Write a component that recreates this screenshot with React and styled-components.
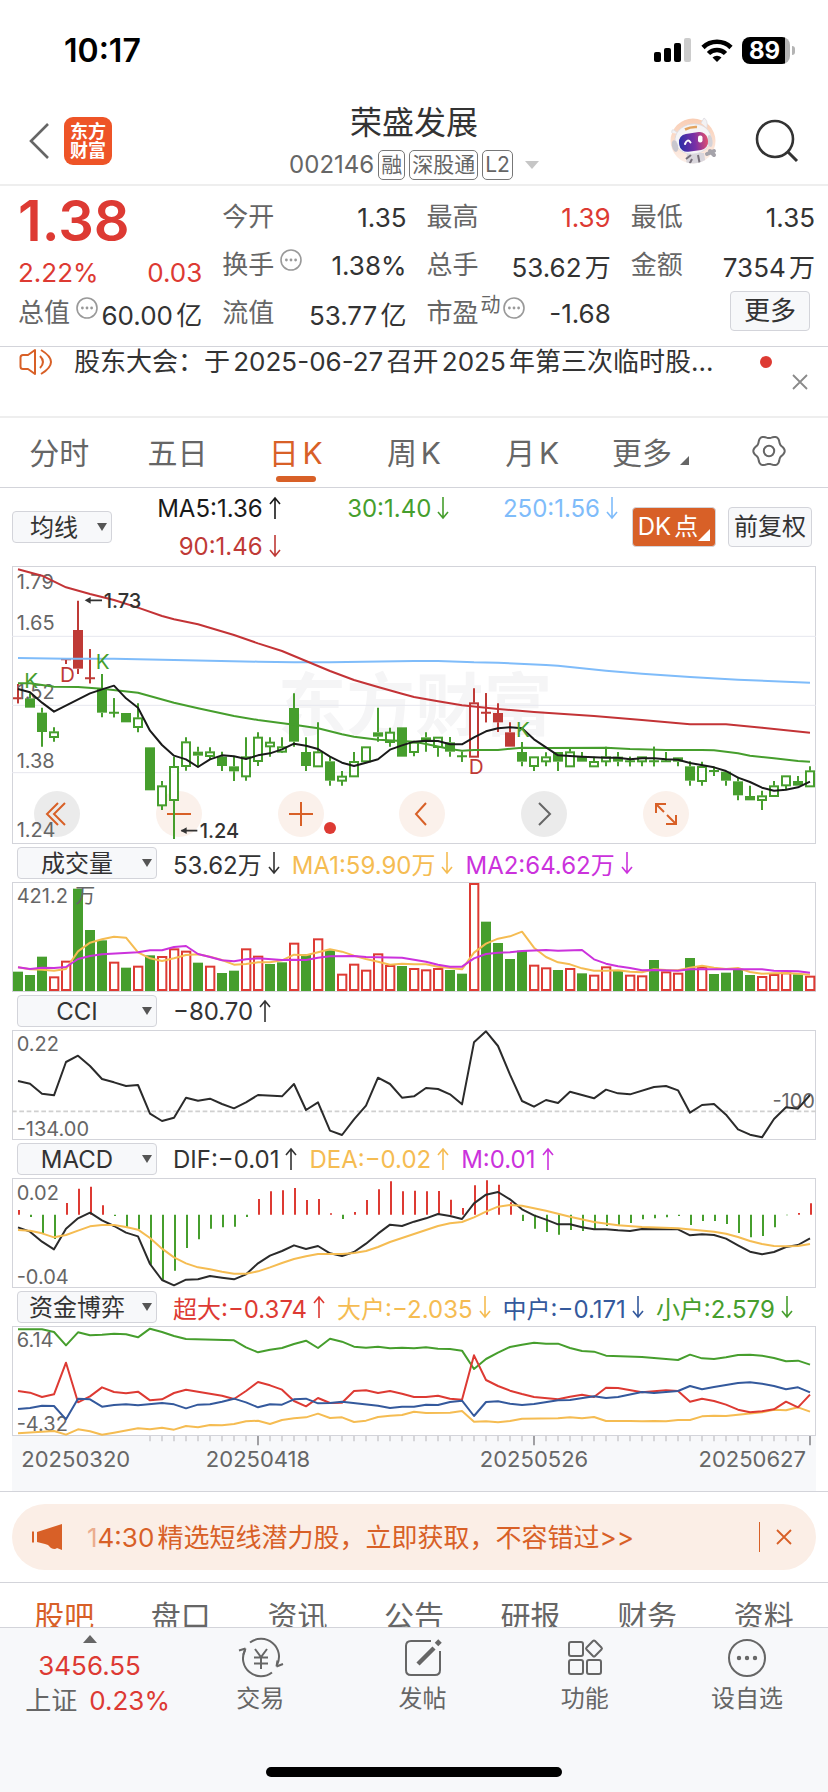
import React from "react";
import styled, { createGlobalStyle } from "styled-components";

const c = {
  text: "#333333",
  sub: "#666666",
  red: "#dd3a33",
  darkRed: "#bf3a36",
  orange: "#d86027",
  green: "#469e2d",
  blue: "#7fbcfa",
  navy: "#34599c",
  yellow: "#f5bc52",
  purple: "#cb32dc",
  line: "#d3d4da",
  panel: "#f7f8fa",
};

const FONT = `Inter, "Noto Sans CJK SC", sans-serif`;

const GlobalStyle = createGlobalStyle`
  * { box-sizing: border-box; }
  body {
    margin: 0;
    background: #fff;
    color: ${c.text};
    font-family: ${FONT};
    text-autospace: normal;
  }
  button, select {
    font-family: inherit;
    color: inherit;
    background: none;
    border: 0;
    padding: 0;
    margin: 0;
    cursor: pointer;
  }
  svg { display: block; flex: none; }
`;

const Page = styled.div`
  display: flex;
  flex-direction: column;
  min-height: 100vh;
`;

/* ---------- status bar ---------- */

const StatusBar = styled.div`
  height: 100px;
  padding: 0 33px 0 64px;
  display: flex;
  align-items: center;
  justify-content: space-between;
  color: #000;
`;

const Clock = styled.time`
  font-size: 32px;
  font-weight: 600;
`;

const StatusIcons = styled.div`
  display: flex;
  align-items: center;
  gap: 9px;
`;

const Battery = styled.div`
  display: flex;
  align-items: center;
  gap: 2px;
`;

const BatteryBody = styled.span`
  width: 48px;
  height: 27px;
  border-radius: 8px;
  background: linear-gradient(90deg, #000 43px, #b4b4b4 43px);
  color: #fff;
  font-size: 24px;
  line-height: 27px;
  font-weight: 700;
  text-align: center;
  padding-right: 3px;
`;

const BatteryTip = styled.span`
  width: 3px;
  height: 9px;
  border-radius: 0 4px 4px 0;
  background: #b4b4b4;
`;

/* ---------- header ---------- */

const Header = styled.header`
  display: grid;
  grid-template-columns: 1fr auto 1fr;
  align-items: center;
  padding: 3px 29px 4px;
  border-bottom: 2px solid #eeeeee;
`;

const HeaderSide = styled.div`
  display: flex;
  align-items: center;
  justify-content: ${(p) => (p.$end ? "flex-end" : "flex-start")};
  gap: ${(p) => (p.$end ? "38px" : "15px")};
  padding-bottom: 2px;
`;

const Logo = styled.a`
  width: 48px;
  height: 48px;
  border-radius: 9px;
  background: #ee5427;
  color: #fff;
  font-size: 18px;
  line-height: 19px;
  font-weight: 700;
  text-align: center;
  text-decoration: none;
  padding-top: 5px;
`;

const TitleBlock = styled.div`
  display: flex;
  flex-direction: column;
  align-items: center;
  gap: 7px;
`;

const Title = styled.h1`
  margin: 0;
  font-size: 32px;
  line-height: 40px;
  font-weight: 400;
`;

const CodeLine = styled.div`
  display: flex;
  align-items: center;
  gap: 4px;
  color: ${c.sub};
  font-size: 24px;
  line-height: 30px;
`;

const Chip = styled.span`
  height: 30px;
  border: 1px solid #777;
  border-radius: 5px;
  padding: 0 2px;
  font-size: 21px;
  line-height: 28px;
`;

const Caret = styled.span`
  width: 0;
  height: 0;
  margin-left: ${(p) => p.$gap || "0"};
  border: 7px solid transparent;
  border-top: 8px solid #c6c6c6;
  border-bottom: 0;
`;

/* ---------- quote ---------- */

const Quote = styled.section`
  display: grid;
  grid-template-columns: repeat(4, 1fr);
  column-gap: 20px;
  padding: 7px 13px 9px 18px;
  border-bottom: 1px solid ${c.line};
  font-size: 26px;
`;

const QuoteColumn = styled.div`
  display: flex;
  flex-direction: column;
`;

const Price = styled.strong`
  color: ${c.red};
  font-size: 56px;
  line-height: 56px;
  font-weight: 600;
`;

const QuoteRow = styled.div`
  display: flex;
  align-items: center;
  justify-content: space-between;
  height: ${(p) => p.$h || "48px"};
  color: ${(p) => (p.$red ? c.red : c.text)};
  white-space: nowrap;
`;

const QuoteLabel = styled.span`
  display: flex;
  align-items: flex-start;
  gap: 6px;
  line-height: 36px;
  color: ${c.sub};
`;

const Sup = styled.sup`
  font-size: 20px;
  line-height: 20px;
  margin: 0 -4px;
  vertical-align: top;
`;

const InfoIcon = styled.svg`
  margin-top: 2px;
`;

const MoreButton = styled.button`
  align-self: flex-end;
  width: 80px;
  height: 40px;
  margin: 2px 5px 0 0;
  border: 1px solid ${c.line};
  border-radius: 4px;
  background: ${c.panel};
  font-size: 26px;
  line-height: 38px;
`;

/* ---------- notice ---------- */

const Notice = styled.section`
  display: flex;
  height: 71px;
  padding: 0 20px 0 19px;
  border-bottom: 2px solid #eeeeee;
`;

const NoticeText = styled.p`
  flex: 1;
  margin: 0 0 0 21px;
  font-size: 26px;
  line-height: 30px;
  white-space: nowrap;
`;

const NoticeDot = styled.span`
  width: 12px;
  height: 12px;
  margin: 9px 20px 0 0;
  border-radius: 50%;
  background: ${c.red};
`;

const NoticeClose = styled.button`
  align-self: center;
`;

/* ---------- period tabs ---------- */

const Periods = styled.nav`
  display: grid;
  grid-template-columns: repeat(7, 1fr);
  height: 70px;
  border-bottom: 1px solid ${c.line};
`;

const Period = styled.button`
  position: relative;
  display: flex;
  align-items: center;
  justify-content: center;
  gap: 8px;
  padding-bottom: 4px;
  font-size: 30px;
  color: ${(p) => (p.$active ? c.orange : c.sub)};
  &::after {
    content: "";
    display: ${(p) => (p.$active ? "block" : "none")};
    position: absolute;
    bottom: 5px;
    left: calc(50% - 20px);
    width: 40px;
    height: 6px;
    border-radius: 3px;
    background: ${c.orange};
  }
`;

const Corner = styled.span`
  width: 0;
  height: 0;
  align-self: flex-end;
  margin-bottom: ${(p) => p.$lift || "0"};
  border-left: ${(p) => p.$size} solid transparent;
  border-bottom: ${(p) => p.$size} solid ${(p) => p.$color};
`;

/* ---------- indicator headers ---------- */

const AverageBar = styled.div`
  display: flex;
  align-items: center;
  height: 78px;
  padding: 0 16px 0 12px;
`;

const AverageGrid = styled.div`
  flex: 1;
  display: grid;
  grid-template-columns: repeat(3, 1fr);
  row-gap: 2px;
  padding-right: 14px;
`;

const Reading = styled.span`
  display: flex;
  align-items: center;
  justify-content: ${(p) => (p.$end ? "flex-end" : "flex-start")};
  gap: 6px;
  height: 36px;
  font-size: 24px;
  white-space: nowrap;
  text-autospace: no-autospace;
  color: ${(p) => p.$color};
`;

const ToolButton = styled.button`
  display: flex;
  align-items: center;
  justify-content: center;
  width: 84px;
  height: 40px;
  margin-left: ${(p) => p.$gap || "0"};
  border: 1px solid ${c.line};
  border-radius: 4px;
  background: ${(p) => (p.$on ? c.orange : c.panel)};
  color: ${(p) => (p.$on ? "#fff" : c.text)};
  font-size: 24px;
  line-height: 38px;
  white-space: nowrap;
`;

const SelectBox = styled.span`
  position: relative;
  display: block;
  width: ${(p) => p.$w};
  height: 32px;
  &::after {
    content: "";
    position: absolute;
    right: 5px;
    top: 12px;
    border: 5px solid transparent;
    border-top: 8px solid #555;
    border-bottom: 0;
    pointer-events: none;
  }
`;

const Select = styled.select`
  appearance: none;
  width: 100%;
  height: 32px;
  padding: 2px ${(p) => p.$pad} 0 0;
  border: 1px solid ${c.line};
  border-radius: 4px;
  background: ${c.panel};
  font-size: 24px;
  line-height: 28px;
  text-align: center;
  text-align-last: center;
`;

const IndicatorBar = styled.div`
  display: flex;
  align-items: center;
  gap: 12px;
  height: 38px;
  padding-left: 5px;
  & > ${SelectBox} { margin-right: 4px; }
`;

/* ---------- charts ---------- */

const Charts = styled.main`
  padding: 0 12px;
`;

const Panel = styled.div`
  position: relative;
  outline: 1px solid ${c.line};
  outline-offset: -1px;
  overflow: hidden;
`;

const Plot = styled.svg`
  position: relative;
  width: 100%;
  height: auto;
  pointer-events: none;
  font-family: ${FONT};
`;

const ChartTools = styled.div`
  position: absolute;
  left: 22px;
  right: 127px;
  bottom: 7px;
  display: flex;
  justify-content: space-between;
`;

const RoundButton = styled.button`
  position: relative;
  width: 46px;
  height: 46px;
  border-radius: 50%;
  display: flex;
  align-items: center;
  justify-content: center;
  background: ${(p) => (p.$grey ? "#ebebeb" : "#fbf1eb")};
`;

const Badge = styled.span`
  position: absolute;
  left: 46px;
  top: 31px;
  width: 12px;
  height: 12px;
  border-radius: 50%;
  background: ${c.red};
`;

/* ---------- promo ---------- */

const PromoWrap = styled.section`
  padding: 12px 12px 12px;
  border-top: 1px solid ${c.line};
  border-bottom: 1px solid ${c.line};
`;

const Promo = styled.div`
  display: flex;
  align-items: center;
  height: 66px;
  padding: 0 24px 0 20px;
  border-radius: 33px;
  background: #fbeee6;
  color: ${c.orange};
`;

const PromoLink = styled.a`
  flex: 1;
  margin-left: 23px;
  padding-bottom: 4px;
  color: inherit;
  font-size: 26px;
  text-decoration: none;
  white-space: nowrap;
`;

const Faded = styled.span`
  opacity: 0.45;
`;

const PromoClose = styled.button`
  display: flex;
  align-items: center;
  height: 30px;
  padding-left: 16px;
  border-left: 1px solid ${c.orange};
`;

/* ---------- content tabs ---------- */

const Sections = styled.nav`
  display: grid;
  grid-template-columns: repeat(7, 1fr);
  height: 44px;
  padding: 11px 6px 0;
  overflow: hidden;
`;

const SectionTab = styled.a`
  font-size: 30px;
  line-height: 44px;
  text-align: center;
  text-decoration: none;
  color: ${(p) => (p.$active ? c.orange : c.sub)};
`;

/* ---------- bottom bar ---------- */

const BottomBar = styled.footer`
  flex: 1;
  display: flex;
  flex-direction: column;
  justify-content: space-between;
  min-height: 166px;
  padding-bottom: 16px;
  border-top: 1px solid ${c.line};
  background: ${c.panel};
`;

const Actions = styled.div`
  display: grid;
  grid-template-columns: 179fr repeat(4, 162fr);
`;

const IndexButton = styled.button`
  display: flex;
  flex-direction: column;
  align-items: center;
  padding-top: 7px;
  font-size: 26px;
  line-height: 35px;
  color: ${c.red};
`;

const UpMark = styled.span`
  border: 7px solid transparent;
  border-bottom: 8px solid ${c.sub};
  border-top: 0;
  margin-bottom: 5px;
`;

const IndexLine = styled.span`
  display: flex;
  gap: 12px;
  padding-left: 16px;
  & > span:first-child { color: ${c.sub}; }
`;

const Action = styled.button`
  display: flex;
  flex-direction: column;
  align-items: center;
  gap: 3px;
  padding-top: 10px;
  color: ${c.sub};
  font-size: 24px;
  line-height: 36px;
`;

const HomeIndicator = styled.span`
  align-self: center;
  width: 296px;
  height: 10px;
  border-radius: 5px;
  background: #000;
`;

/* ---------- icons ---------- */

const Arrow = ({ up }) => (
  <svg width="12" height="24" viewBox="0 0 12 24" fill="none" stroke="currentColor" strokeWidth="1.6">
    {up ? <path d="M6 23V2M1 8l5-6 5 6" /> : <path d="M6 1v21M1 16l5 6 5-6" />}
  </svg>
);

const Cross = ({ color, size = 16 }) => (
  <svg width={size} height={size} viewBox="0 0 16 16" fill="none" stroke={color} strokeWidth="1.8">
    <path d="M1 1l14 14M15 1L1 15" />
  </svg>
);

const Info = () => (
  <InfoIcon width="22" height="22" viewBox="0 0 22 22" fill="#999">
    <circle cx="11" cy="11" r="10" fill="none" stroke="#999" strokeWidth="1.6" />
    <circle cx="6.4" cy="11" r="1.4" />
    <circle cx="11" cy="11" r="1.4" />
    <circle cx="15.6" cy="11" r="1.4" />
  </InfoIcon>
);

const gearPath = Array.from({ length: 72 }, (_, k) => {
  const a = (k * Math.PI) / 36;
  const r = 14.3 + 1.4 * Math.cos(6 * a);
  return `${(17 + r * Math.cos(a)).toFixed(2)},${(17 + r * Math.sin(a)).toFixed(2)}`;
}).join(" ");

const Gear = () => (
  <svg width="34" height="34" viewBox="0 0 34 34" fill="none" stroke={c.sub} strokeWidth="2">
    <polygon points={gearPath} />
    <circle cx="17" cy="17" r="5.2" />
  </svg>
);

const Robot = () => (
  <svg width="48" height="48" viewBox="0 0 48 48">
    <defs>
      <linearGradient id="visor" x1="0" y1="0" x2="1" y2="0">
        <stop offset="0" stopColor="#2a2fa8" />
        <stop offset="0.55" stopColor="#7a2fa5" />
        <stop offset="1" stopColor="#e0506f" />
      </linearGradient>
      <linearGradient id="halo" x1="0" y1="0" x2="0" y2="1">
        <stop offset="0" stopColor="#f9cdb4" />
        <stop offset="1" stopColor="#fdf0e9" />
      </linearGradient>
      <clipPath id="disc"><circle cx="24" cy="24" r="22.5" /></clipPath>
    </defs>
    <circle cx="24" cy="24" r="22.5" fill="url(#halo)" />
    <g clipPath="url(#disc)">
      <path d="M18 36h17l2 12H17z" fill="#d9d6dc" />
      <path d="M29 38l2 10M22 38l-5 4M23 42l-3 6" stroke="#77707a" strokeWidth="2" fill="none" />
    </g>
    <path d="M38 37l7-3M41 34l4 4" stroke="#a5a3aa" strokeWidth="4" strokeLinecap="round" />
    <path d="M3 16q-1-4 2-3l5 4M32 6l3-5q4 2 3 10" fill="#f3f2f4" stroke="#dddbe0" strokeWidth="0.8" />
    <ellipse cx="24" cy="22" rx="18" ry="15" fill="#f5f4f6" stroke="#dcdae0" strokeWidth="0.8" transform="rotate(-8 24 22)" />
    <ellipse cx="6" cy="29" rx="3" ry="6" fill="#c9c7ce" transform="rotate(-14 6 29)" />
    <ellipse cx="41" cy="24" rx="2.5" ry="6" fill="#d4d2d8" transform="rotate(-8 41 24)" />
    <path d="M16 12.500q6-3 12-2.500" stroke="#e3a35f" strokeWidth="2.6" fill="none" />
    <rect x="10" y="16" width="29" height="18" rx="8" fill="url(#visor)" transform="rotate(-8 24 25)" />
    <path d="M16 27q2.500-6 5.500-1.500" stroke="#fff" strokeWidth="2" fill="none" strokeLinecap="round" />
    <rect x="29" y="18.500" width="4.500" height="7" rx="2" fill="#fff" />
  </svg>
);

const Search = () => (
  <svg width="44" height="44" viewBox="0 0 44 44" fill="none" stroke={c.text} strokeWidth="2.6">
    <circle cx="20" cy="20" r="18" />
    <path d="M32.500 32.500L42 42" strokeWidth="3" />
  </svg>
);

const Speaker = () => (
  <svg width="34" height="30" viewBox="0 0 34 30" fill="none" stroke={c.orange} strokeWidth="2" strokeLinejoin="round">
    <path d="M16 3v24l-7-5H4q-2.500 0-2.500-2.500v-9Q1.500 8 4 8h5z" />
    <path d="M21 9q6 6 0 12M22 3q20 12 0 24" />
  </svg>
);

const Megaphone = () => (
  <svg width="32" height="28" viewBox="0 0 32 28" fill={c.orange}>
    <path d="M0 8.500h2v11H0zM5 9L30 1v26l-5-2q-2 2-6 0l-3-3-3-1-8-2z" />
  </svg>
);

const toolIcons = {
  first: "M13 1L2 12l11 11M20 1L9 12l11 11",
  minus: "M0 12h24",
  plus: "M0 12h24M12 0v24",
  prev: "M16 1L6 12l10 11",
  next: "M7 1l11 11L7 23",
  expand: "M2 11V2h10M2 2l8 8M22 13v9H12M22 22l-9-9",
};

const ToolIcon = ({ name, color = c.orange }) => (
  <svg width="24" height="24" viewBox="0 0 24 24" fill="none" stroke={color} strokeWidth="2">
    <path d={toolIcons[name]} />
  </svg>
);

const actionIcons = {
  trade: (
    <>
      <path d="M10 4.500A18 18 0 0 1 37 27M32 34.500A18 18 0 0 1 5 12" />
      <path d="M-1 12.500l6.500-2M5.500 10.500l-2 6M43 26l-6.500 2.500M36.500 28.500l1-6" />
      <path d="M15 11l6 8 6-8M14 19.500h14M14 25.500h14M21 19v12" />
    </>
  ),
  post: (
    <>
      <path d="M28 3H8Q3 3 3 8v24q0 5 5 5h24q5 0 5-5V13" />
      <path d="M31 10L20 21l-5 5" strokeWidth="4.500" />
      <path d="M33.500 6.500L37 3" strokeWidth="5" />
    </>
  ),
  apps: (
    <>
      <rect x="4" y="4" width="14" height="14" rx="2" />
      <rect x="4" y="22" width="14" height="14" rx="2" />
      <rect x="22" y="22" width="14" height="14" rx="2" />
      <rect x="23" y="4.500" width="12" height="12" rx="1.500" transform="rotate(45 29 10.500)" />
    </>
  ),
  more: (
    <>
      <circle cx="20" cy="20" r="18" />
      <circle cx="12" cy="20" r="1.200" />
      <circle cx="20" cy="20" r="1.200" />
      <circle cx="28" cy="20" r="1.200" />
    </>
  ),
};

const ActionIcon = ({ name }) => (
  <svg width="40" height="40" viewBox="0 0 40 40" overflow="visible" fill="none" stroke="currentColor" strokeWidth="2">
    {actionIcons[name]}
  </svg>
);

/* ---------- chart data: three drawing units per pixel ---------- */

const PLOT_WIDTH = 2412;
const px = (i) => 18 + 36 * i;

// [high, body top, body bottom, low, kind]; f filled, h hollow, x cross; capital letters are red
const candles = [
  [372, 415, 415, 430, "X"], [400, 415, 443, 443, "f"], [443, 458, 516, 560, "f"], [502, 515, 532, 545, "h"],
  [298, 298, 298, 312, "X"], [122, 210, 326, 342, "F"], [268, 355, 355, 370, "X"], [342, 387, 458, 472, "f"],
  [415, 458, 458, 472, "x"], [459, 459, 487, 487, "f"], [430, 473, 502, 517, "h"], [562, 562, 691, 691, "f"],
  [663, 677, 737, 750, "h"], [590, 619, 721, 837, "h"], [532, 545, 619, 632, "h"], [560, 575, 587, 620, "f"],
  [562, 575, 589, 600, "h"], [575, 590, 618, 633, "f"], [590, 619, 634, 663, "f"], [532, 590, 650, 662, "h"],
  [517, 531, 604, 618, "h"], [532, 546, 560, 590, "h"], [532, 560, 576, 578, "h"], [400, 444, 545, 560, "f"],
  [532, 576, 618, 633, "f"], [487, 575, 620, 620, "h"], [590, 604, 662, 677, "f"], [633, 648, 663, 677, "h"],
  [576, 604, 650, 650, "h"], [560, 560, 605, 605, "h"], [443, 517, 530, 545, "f"], [503, 516, 547, 560, "h"],
  [502, 502, 590, 590, "f"], [546, 546, 577, 589, "h"], [517, 532, 546, 575, "f"], [531, 531, 562, 590, "h"],
  [531, 547, 575, 590, "f"], [575, 589, 589, 605, "x"], [385, 428, 591, 591, "H"], [400, 458, 458, 487, "X"],
  [430, 459, 487, 516, "F"], [487, 517, 560, 560, "F"], [546, 576, 605, 619, "f"], [590, 590, 619, 633, "h"],
  [577, 590, 605, 619, "h"], [576, 576, 605, 633, "f"], [562, 575, 620, 620, "h"], [576, 590, 605, 605, "f"],
  [590, 604, 620, 620, "h"], [560, 590, 605, 619, "h"], [576, 590, 605, 619, "f"], [590, 604, 604, 619, "x"],
  [590, 590, 605, 619, "h"], [560, 604, 604, 619, "x"], [576, 604, 604, 604, "x"], [592, 592, 605, 619, "f"],
  [604, 619, 662, 677, "f"], [605, 619, 664, 677, "h"], [620, 633, 633, 648, "x"], [635, 635, 662, 677, "f"],
  [650, 664, 706, 721, "f"], [677, 708, 721, 721, "f"], [692, 707, 721, 750, "h"], [663, 677, 709, 709, "h"],
  [647, 647, 677, 690, "h"], [648, 663, 677, 677, "f"], [619, 632, 680, 680, "h"],
];

// Curves are "index:y" lists
const curves = {
  ma5: "0:387 1:397 2:428 3:455 6:400 7:388 8:377 9:415 10:443 11:512 12:555 13:587 14:598 15:621 16:598 17:586 18:589 19:597 20:586 21:580 22:568 23:551 24:557 25:567 26:590 27:608 28:618 29:608 30:598 31:569 32:556 33:545 34:542 35:543 36:553 37:553 38:532 39:514 40:505 41:502 42:505 43:538 44:562 45:586 47:590 49:593 50:593 51:598 52:595 53:595 54:598 55:599 56:609 58:622 59:633 60:653 61:666 62:683 63:692 64:689 65:682 66:665",
  ma30: "0:370 1:370 2:375 3:380 5:381 7:386 10:398 13:428 15:445 18:468 20:480 23:494 25:505 27:523 28:530 30:539 32:543 33:545 34:552 36:567 37:572 38:570 40:570 42:563 44:564 49:563 51:567 54:570 57:570 58:571 60:580 61:587 63:595 65:603 66:605",
  ma90: "0:28 2:47 4:82 6:102 8:120 10:143 12:168 13:178 15:193 18:225 20:250 22:273 24:303 26:333 28:360 30:381 32:401 33:411 35:424 37:436 40:447 43:456 48:468 52:480 56:493 59:493 62:503 66:518",
  ma250: "0:294 4:296 8:296 13:300 20:305 23:307 26:307 33:303 35:303 38:307 40:308 44:315 45:317 49:332 52:341 56:351 60:359 66:368",
  vol1: "0:382 1:388 2:389 3:392 4:387 5:334 6:308 7:298 8:290 9:293 10:337 11:355 12:363 13:355 14:345 15:343 16:350 17:360 18:374 19:372 20:367 21:367 22:361 23:344 24:346 25:337 26:328 27:335 28:347 29:357 30:365 31:374 32:371 33:373 34:373 35:380 36:384 37:388 38:338 39:311 40:296 41:289 42:275 43:323 44:351 45:367 46:373 47:385 48:392 49:392 50:391 51:395 52:397 53:388 54:390 55:391 56:383 57:377 58:383 59:387 60:384 61:396 62:401 63:400 64:399 65:401 66:404",
  vol2: "0:382 1:387 2:383 3:384 4:381 5:357 6:348 7:343 10:337 11:331 12:331 13:321 14:318 15:342 16:351 17:361 18:364 19:358 20:355 22:360 23:359 24:360 25:353 26:349 28:348 29:351 32:353 33:359 34:365 35:374 36:380 37:380 38:355 39:342 40:338 41:337 42:333 44:330 45:332 47:330 48:358 49:371 50:379 51:384 52:391 53:390 55:392 56:388 58:388 62:388 63:392 65:394 66:398",
  cci: "0:723 1:731 2:761 3:766 4:666 5:647 6:678 7:717 8:727 9:738 10:735 11:821 12:843 13:833 14:773 15:782 16:776 17:792 18:805 19:787 20:765 22:769 23:732 24:810 25:787 26:872 27:885 28:838 29:797 30:713 31:732 32:773 33:769 34:744 35:747 36:763 37:793 38:607 39:574 40:618 41:704 42:783 43:800 44:780 45:789 46:755 47:765 48:775 49:749 50:760 51:763 53:741 54:738 55:751 56:818 57:795 58:792 59:824 60:868 61:884 62:892 63:837 64:802 65:806 66:765",
  dif: "0:262 1:275 2:305 3:328 4:266 5:235 6:218 7:241 8:258 9:278 10:289 11:372 12:420 13:436 14:419 15:418 16:408 17:413 18:418 19:403 20:370 21:347 22:333 23:316 24:327 25:318 26:340 27:348 28:336 29:311 30:281 31:254 32:258 33:245 34:235 35:222 36:228 37:237 38:190 39:164 40:156 41:178 42:208 43:226 44:239 45:253 46:253 47:262 48:268 49:268 50:271 51:273 52:267 55:268 56:286 57:283 58:285 59:296 60:316 61:335 62:343 63:336 64:321 65:315 66:295",
  dea: "0:270 1:272 2:280 3:292 4:285 5:272 6:259 7:255 8:255 9:261 10:269 11:294 12:326 13:352 14:370 15:382 16:388 17:395 18:401 19:401 20:394 21:382 22:369 23:357 24:349 25:342 27:342 28:339 29:333 30:321 31:306 32:294 33:282 34:270 35:258 36:250 37:246 38:232 39:215 40:200 41:195 42:197 44:212 46:230 48:246 50:256 52:261 55:265 58:275 59:281 60:291 61:303 62:312 63:318 64:319 65:318 66:312",
  small: "0:568 2:568 3:576 4:616 5:577 6:586 7:584 8:581 9:583 10:592 11:566 12:576 13:588 14:597 18:601 19:622 20:637 21:629 22:624 23:612 24:602 25:624 26:596 27:605 28:620 29:623 30:620 31:625 32:623 33:625 34:622 35:626 36:627 37:632 38:687 39:657 40:638 41:621 42:614 43:608 44:611 45:611 46:624 47:633 48:635 49:647 52:651 55:660 56:644 57:655 58:657 59:652 60:645 61:644 62:647 63:654 64:664 65:662 66:674",
  huge: "0:753 1:758 2:771 3:763 4:668 5:787 6:769 7:742 8:756 9:760 10:755 11:781 12:778 13:759 14:749 17:767 18:777 19:753 20:726 21:736 22:749 23:783 24:799 25:774 26:789 27:788 28:753 29:751 30:759 31:753 32:761 33:771 34:771 35:767 36:776 37:779 38:646 39:720 40:738 41:752 42:762 43:771 45:778 46:770 47:764 48:771 49:743 50:744 52:757 54:751 55:753 56:785 57:776 58:783 59:794 60:809 61:817 62:814 63:808 64:785 65:802 66:764",
  mid: "0:807 1:804 2:797 3:798 4:838 5:776 6:778 7:800 8:795 9:793 10:796 12:789 13:793 14:805 15:794 16:793 17:785 18:776 19:787 20:802 21:793 22:794 23:778 24:776 25:790 26:789 27:785 30:797 31:804 32:800 33:800 34:794 35:795 36:786 37:782 38:828 39:786 40:784 41:791 42:795 43:792 45:781 46:780 48:769 49:774 50:771 52:756 53:759 55:753 56:738 57:748 58:741 60:729 61:727 62:731 63:738 64:748 65:742 66:757",
  large: "0:880 3:873 4:884 5:868 6:874 7:884 8:878 10:865 11:868 12:863 13:869 14:858 15:862 16:855 17:856 18:852 19:844 20:842 21:852 22:840 23:835 24:832 25:821 26:834 27:832 28:846 29:842 30:831 31:827 32:825 33:815 34:819 36:818 37:813 38:845 39:844 40:847 41:843 42:836 45:835 46:832 47:835 48:831 49:843 51:843 52:844 53:843 54:844 55:840 56:840 57:829 58:827 59:828 60:824 62:817 63:809 64:811 65:802 66:815",
};

const volumes =
  "g395 g405 g350 r409 r362 g146 g270 g301 r365 g383 r377 g346 r348 r325 r332 g368 r377 g399 g392 r325 r347 g372 g367 r308 g343 r295 g331 r401 r371 r389 r340 r375 g378 r384 r388 r384 g390 g401 r129 g245 g309 g357 g332 r374 r382 g390 r384 g400 r404 r379 g392 r404 r406 g360 r394 r398 g354 r380 g402 g398 g388 g405 r408 r402 r397 g403 r407".split(" ");

const macdBars = [
  210, 231, 279, 297, 189, 146, 140, 196, 228, 262, 268, 374, 419, 392, 324, 298, 266, 262, 260, 231, 177, 154, 151,
  144, 180, 177, 220, 237, 216, 180, 148, 124, 154, 152, 154, 153, 179, 204, 136, 121, 134, 187, 243, 266, 276, 284,
  270, 273, 268, 258, 254, 249, 238, 235, 232, 228, 255, 243, 243, 252, 279, 292, 288, 262, 226, 219, 190,
];

const Curve = ({ name, color }) => (
  <polyline
    points={curves[name].split(" ").map((p) => {
      const [i, y] = p.split(":");
      return `${px(+i)},${y}`;
    }).join(" ")}
    fill="none"
    stroke={color}
    strokeWidth="6"
    strokeLinejoin="round"
  />
);

const Candle = ({ i, data: [hi, top, bot, lo, kind] }) => {
  const x = px(i);
  const color = kind < "a" ? c.darkRed : c.green;
  const k = kind.toLowerCase();
  return (
    <g stroke={color} strokeWidth="6">
      <path d={`M${x} ${hi}V${top}M${x} ${bot}V${lo}`} />
      {k === "x" && <path d={`M${x - 15} ${top}h30M${x} ${hi}V${lo}`} />}
      {k === "f" && <rect x={x - 15} y={top} width="30" height={bot - top} fill={color} stroke="none" />}
      {k === "h" && <rect x={x - 12} y={top + 2} width="24" height={bot - top - 3} fill="#fff" />}
    </g>
  );
};

const Label = ({ x = 14, y, children, fill = c.sub, size = 60, weight = 400, anchor }) => (
  <text x={x} y={y} fill={fill} fontSize={size} fontWeight={weight} textAnchor={anchor}>
    {children}
  </text>
);

const PricePlot = () => (
  <Plot viewBox={`0 18 ${PLOT_WIDTH} 834`}>
    <Label x={1209} y={510} size={206} weight={700} fill="#f5f5f6" anchor="middle">东方财富</Label>
    <path d="M0 229H2412M0 436H2412M0 638H2412" stroke="#e6e7ee" strokeWidth="3" />
    {candles.map((d, i) => <Candle key={i} i={i} data={d} />)}
    <Label y={87}>1.79</Label>
    <Label y={210}>1.65</Label>
    <Label y={417}>1.52</Label>
    <Label y={625}>1.38</Label>
    <Label y={830}>1.24</Label>
    <Curve name="ma250" color={c.blue} />
    <Curve name="ma90" color="#c33336" />
    <Curve name="ma30" color={c.green} />
    <Curve name="ma5" color="#1a1a1a" />
    <Label x={37} y={385} size={62} fill={c.green}>K</Label>
    <Label x={144} y={365} size={62} fill={c.darkRed}>D</Label>
    <Label x={251} y={326} size={62} fill={c.green}>K</Label>
    <Label x={1370} y={642} size={62} fill={c.darkRed}>D</Label>
    <Label x={1512} y={532} size={62} fill={c.green}>K</Label>
    <g stroke={c.text} fill={c.text} strokeWidth="5">
      <path d="M232 121h38M508 812h48" />
      <path d="M218 121l18-10v20zM506 812l18-10v20z" stroke="none" />
    </g>
    <Label x={275} y={143} weight={500} fill={c.text}>1.73</Label>
    <Label x={563} y={835} weight={500} fill={c.text}>1.24</Label>
  </Plot>
);

const VolumePlot = () => (
  <Plot viewBox={`0 126 ${PLOT_WIDTH} 330`}>
    {volumes.map((v, i) => {
      const y = +v.slice(1);
      return v[0] === "g" ? (
        <rect key={i} x={px(i) - 15} y={y} width="30" height={453 - y} fill={c.green} />
      ) : (
        <rect key={i} x={px(i) - 12} y={y + 3} width="25" height={447 - y} fill="#fff" stroke={c.red} strokeWidth="6" />
      );
    })}
    <Label y={190}>421.2万</Label>
    <Curve name="vol1" color={c.yellow} />
    <Curve name="vol2" color={c.purple} />
  </Plot>
);

const CciPlot = () => (
  <Plot viewBox={`0 570 ${PLOT_WIDTH} 330`}>
    <path d="M0 814H2412" stroke="#d0d0d0" strokeWidth="5" strokeDasharray="14 8" />
    <Label y={634}>0.22</Label>
    <Label y={887}>-134.00</Label>
    <Label x={2409} y={803} anchor="end">-100</Label>
    <Curve name="cci" color="#2b2b2b" />
  </Plot>
);

const MacdPlot = () => (
  <Plot viewBox={`0 114 ${PLOT_WIDTH} 330`}>
    <Label y={179}>0.02</Label>
    <Label y={431}>-0.04</Label>
    {macdBars.map((y, i) => (
      <path key={i} d={`M${px(i) + 3} 224V${y}`} stroke={y < 224 ? c.red : c.green} strokeWidth="6" />
    ))}
    <Curve name="dif" color="#2b2b2b" />
    <Curve name="dea" color={c.yellow} />
  </Plot>
);

const FlowPlot = () => (
  <Plot viewBox={`0 558 ${PLOT_WIDTH} 330`}>
    <Label y={622}>6.14</Label>
    <Label y={874}>-4.32</Label>
    <Curve name="large" color={c.yellow} />
    <Curve name="small" color={c.green} />
    <Curve name="huge" color={c.red} />
    <Curve name="mid" color={c.navy} />
  </Plot>
);

const majorTicks = [20, 43, 66];

const TimeAxis = () => (
  <Plot viewBox={`0 888 ${PLOT_WIDTH} 165`}>
    <rect x="0" y="888" width={PLOT_WIDTH} height="165" fill={c.panel} />
    {Array.from({ length: 56 }, (_, k) => k + 11).map((i) => (
      <path
        key={i}
        d={`M${px(i)} 888v${majorTicks.includes(i) ? 28 : 16}`}
        stroke={majorTicks.includes(i) ? "#8e8e92" : "#cfcfd3"}
        strokeWidth="5"
      />
    ))}
    <Label x={28} y={980} size={66}>20250320</Label>
    <Label x={738} y={980} size={66} anchor="middle">20250418</Label>
    <Label x={1566} y={980} size={66} anchor="middle">20250526</Label>
    <Label x={2382} y={980} size={66} anchor="end">20250627</Label>
  </Plot>
);

/* ---------- composition ---------- */

const Picker = ({ name, label, width = "140px", pad = "20px" }) => (
  <SelectBox $w={width}>
    <Select aria-label={label} $pad={pad} defaultValue={name}>
      <option value={name}>{name}</option>
    </Select>
  </SelectBox>
);

const Value = ({ color, up, end, children }) => (
  <Reading $color={color} $end={end}>
    {children}
    <Arrow up={up} />
  </Reading>
);

const Stat = ({ label, value, info, red, h, sup }) => (
  <QuoteRow $red={red} $h={h}>
    <QuoteLabel>
      {label}
      {sup && <Sup>{sup}</Sup>}
      {info && <Info />}
    </QuoteLabel>
    <span>{value}</span>
  </QuoteRow>
);

const indicators = [
  {
    name: "成交量",
    Plot: VolumePlot,
    values: [["53.62万", c.text], ["MA1:59.90万", c.yellow], ["MA2:64.62万", c.purple]],
  },
  { name: "CCI", Plot: CciPlot, values: [["−80.70", c.text, true]] },
  {
    name: "MACD",
    Plot: MacdPlot,
    values: [["DIF:−0.01", c.text, true], ["DEA:−0.02", c.yellow, true], ["M:0.01", c.purple, true]],
  },
  {
    name: "资金博弈",
    Plot: FlowPlot,
    values: [["超大:−0.374", c.red, true], ["大户:−2.035", c.yellow], ["中户:−0.171", c.navy], ["小户:2.579", c.green]],
  },
];

const actions = [
  ["trade", "交易"],
  ["post", "发帖"],
  ["apps", "功能"],
  ["more", "设自选"],
];

export default function App() {
  return (
    <Page>
      <GlobalStyle />
      <StatusBar>
        <Clock>10:17</Clock>
        <StatusIcons>
          <svg width="38" height="24" viewBox="0 0 38 24">
            <rect x="0" y="14" width="7" height="10" rx="2" />
            <rect x="10" y="10" width="7" height="14" rx="2" />
            <rect x="20" y="5" width="7" height="19" rx="2" />
            <rect x="30" y="0" width="7" height="24" rx="2" fill="#cccccc" />
          </svg>
          <svg width="32" height="24" viewBox="0 0 32 24" fill="none" stroke="#000" strokeWidth="4.600">
            <path d="M2 9.500a20 20 0 0 1 28 0" />
            <path d="M7.500 15.500a12 12 0 0 1 17 0" />
            <path d="M16 24l-4.500-4.500a6.500 6.500 0 0 1 9 0z" fill="#000" stroke="none" />
          </svg>
          <Battery>
            <BatteryBody>89</BatteryBody>
            <BatteryTip />
          </Battery>
        </StatusIcons>
      </StatusBar>

      <Header>
        <HeaderSide>
          <button aria-label="返回">
            <svg width="20" height="36" viewBox="0 0 20 36" fill="none" stroke="#666" strokeWidth="2.600">
              <path d="M19 1L2 18l17 17" />
            </svg>
          </button>
          <Logo href="#home">东方<br />财富</Logo>
        </HeaderSide>
        <TitleBlock>
          <Title>荣盛发展</Title>
          <CodeLine>
            002146
            <Chip>融</Chip>
            <Chip>深股通</Chip>
            <Chip>L2</Chip>
            <Caret $gap="8px" />
          </CodeLine>
        </TitleBlock>
        <HeaderSide $end>
          <button aria-label="智能助手"><Robot /></button>
          <button aria-label="搜索"><Search /></button>
        </HeaderSide>
      </Header>

      <Quote>
        <QuoteColumn>
          <Price>1.38</Price>
          <QuoteRow $h="46px" $red>
            <span>2.22%</span>
            <span>0.03</span>
          </QuoteRow>
          <Stat label="总值" info value="60.00亿" h="36px" />
        </QuoteColumn>
        <QuoteColumn>
          <Stat label="今开" value="1.35" />
          <Stat label="换手" info value="1.38%" />
          <Stat label="流值" value="53.77亿" />
        </QuoteColumn>
        <QuoteColumn>
          <Stat label="最高" value={<QuoteRow as="span" $red>1.39</QuoteRow>} />
          <Stat label="总手" value="53.62万" />
          <Stat label="市盈" sup="动" info value="-1.68" />
        </QuoteColumn>
        <QuoteColumn>
          <Stat label="最低" value="1.35" />
          <Stat label="金额" value="7354万" />
          <MoreButton>更多</MoreButton>
        </QuoteColumn>
      </Quote>

      <Notice>
        <Speaker />
        <NoticeText>股东大会：于2025-06-27召开2025年第三次临时股...</NoticeText>
        <NoticeDot />
        <NoticeClose aria-label="关闭公告"><Cross color="#8a8a8a" /></NoticeClose>
      </Notice>

      <Periods>
        <Period>分时</Period>
        <Period>五日</Period>
        <Period $active>日K</Period>
        <Period>周K</Period>
        <Period>月K</Period>
        <Period>
          更多
          <Corner $size="9px" $lift="18px" $color={c.sub} />
        </Period>
        <Period aria-label="设置"><Gear /></Period>
      </Periods>

      <AverageBar>
        <Picker name="均线" label="主图指标" width="100px" pad="16px" />
        <AverageGrid>
          <Value end up color="#1a1a1a">MA5:1.36</Value>
          <Value end color={c.green}>30:1.40</Value>
          <Value end color={c.blue}>250:1.56</Value>
          <Value end color={c.darkRed}>90:1.46</Value>
        </AverageGrid>
        <ToolButton $on>
          DK点
          <Corner $size="12px" $lift="5px" $color="#fff" />
        </ToolButton>
        <ToolButton $gap="12px">前复权</ToolButton>
      </AverageBar>

      <Charts>
        <Panel>
          <ChartTools>
            <RoundButton $grey aria-label="最早"><ToolIcon name="first" /></RoundButton>
            <RoundButton aria-label="缩小"><ToolIcon name="minus" /></RoundButton>
            <RoundButton aria-label="放大"><ToolIcon name="plus" /><Badge /></RoundButton>
            <RoundButton aria-label="左移"><ToolIcon name="prev" /></RoundButton>
            <RoundButton $grey aria-label="右移"><ToolIcon name="next" color={c.sub} /></RoundButton>
            <RoundButton aria-label="全屏"><ToolIcon name="expand" /></RoundButton>
          </ChartTools>
          <PricePlot />
        </Panel>
        {indicators.map(({ name, values, Plot: IndicatorPlot }) => (
          <React.Fragment key={name}>
            <IndicatorBar>
              <Picker name={name} label="副图指标" />
              {values.map(([text, color, up]) => (
                <Value key={text} color={color} up={up}>{text}</Value>
              ))}
            </IndicatorBar>
            <Panel><IndicatorPlot /></Panel>
          </React.Fragment>
        ))}
        <TimeAxis />
      </Charts>

      <PromoWrap>
        <Promo>
          <Megaphone />
          <PromoLink href="#promo"><Faded>1</Faded>4:30精选短线潜力股，立即获取，不容错过&gt;&gt;</PromoLink>
          <PromoClose aria-label="关闭推广"><Cross color={c.orange} /></PromoClose>
        </Promo>
      </PromoWrap>

      <Sections>
        {["股吧", "盘口", "资讯", "公告", "研报", "财务", "资料"].map((t, i) => (
          <SectionTab key={t} href={`#tab${i}`} $active={i === 0}>{t}</SectionTab>
        ))}
      </Sections>

      <BottomBar>
        <Actions>
          <IndexButton>
            <UpMark />
            <span>3456.55</span>
            <IndexLine>
              <span>上证</span>
              <span>0.23%</span>
            </IndexLine>
          </IndexButton>
          {actions.map(([icon, text]) => (
            <Action key={icon}>
              <ActionIcon name={icon} />
              {text}
            </Action>
          ))}
        </Actions>
        <HomeIndicator />
      </BottomBar>
    </Page>
  );
}
